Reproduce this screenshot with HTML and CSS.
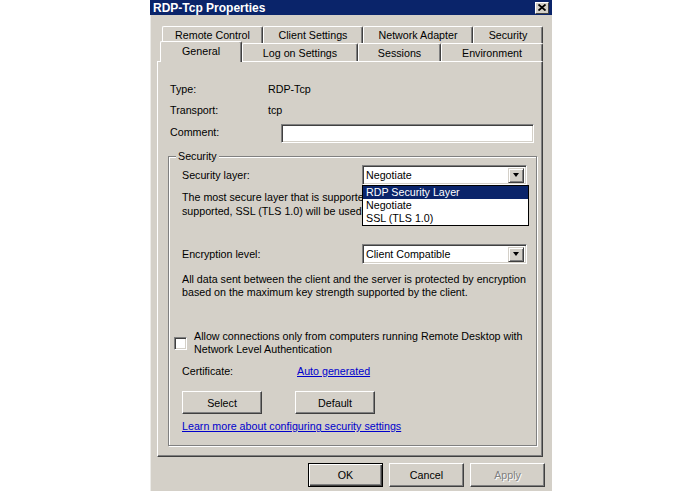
FILE: index.html
```html
<!DOCTYPE html>
<html lang="en">
<head>
    <meta charset="UTF-8">
    <title>RDP-Tcp Properties</title>
    <link rel="stylesheet" href="styles.css">
</head>
<body>
    <div class="window">
        <!-- title bar -->
        <div class="titlebar">
            <span class="title">RDP-Tcp Properties</span>
            <span class="close">
                <svg width="8" height="7" viewBox="0 0 8 7">
                    <path d="M0.5 0.5 L7.5 6.5 M7.5 0.5 L0.5 6.5" stroke="#000" stroke-width="1.8" fill="none"/>
                </svg>
            </span>
        </div>

        <!-- two rows of tabs -->
        <div class="tabs">
            <div class="tab-row back">
                <div class="tab tab-remote">Remote Control</div>
                <div class="tab tab-client">Client Settings</div>
                <div class="tab tab-adapter">Network Adapter</div>
                <div class="tab tab-security">Security</div>
            </div>
            <div class="tab-row front">
                <div class="tab tab-general active">General</div>
                <div class="tab tab-logon">Log on Settings</div>
                <div class="tab tab-sessions">Sessions</div>
                <div class="tab tab-env">Environment</div>
            </div>
        </div>

        <!-- General page -->
        <div class="panel">
            <div class="info-row">
                <span class="label">Type:</span>
                <span>RDP-Tcp</span>
            </div>
            <div class="info-row">
                <span class="label">Transport:</span>
                <span>tcp</span>
            </div>
            <div class="info-row">
                <span class="label">Comment:</span>
                <span class="textbox"></span>
            </div>

            <div class="group">
                <div class="group-title">Security</div>

                <div class="field-row layer-row">
                    <span>Security layer:</span>
                    <div class="combo">
                        <span class="combo-value">Negotiate</span>
                        <span class="combo-btn"><span class="arrow"></span></span>
                    </div>
                    <!-- open list, drawn over the text below -->
                    <ul class="dropdown">
                        <li class="selected">RDP Security Layer</li>
                        <li>Negotiate</li>
                        <li>SSL (TLS 1.0)</li>
                    </ul>
                </div>
                <p class="desc desc-layer">The most secure layer that is supported by the client will be used. If<br>supported, SSL (TLS 1.0) will be used.</p>

                <div class="field-row enc-row">
                    <span>Encryption level:</span>
                    <div class="combo">
                        <span class="combo-value">Client Compatible</span>
                        <span class="combo-btn"><span class="arrow"></span></span>
                    </div>
                </div>
                <p class="desc desc-enc">All data sent between the client and the server is protected by encryption<br>based on the maximum key strength supported by the client.</p>

                <div class="check-row">
                    <span class="checkbox"></span>
                    <span>Allow connections only from computers running Remote Desktop with<br>Network Level Authentication</span>
                </div>

                <div class="cert-row">
                    <span>Certificate:</span>
                    <a class="link" href="#">Auto generated</a>
                </div>

                <div class="cert-buttons">
                    <button class="btn btn-cert">Select</button>
                    <button class="btn btn-cert">Default</button>
                </div>

                <a class="link learn" href="#">Learn more about configuring security settings</a>
            </div>
        </div>

        <!-- dialog buttons -->
        <div class="actions">
            <button class="btn default">OK</button>
            <button class="btn">Cancel</button>
            <button class="btn disabled">Apply</button>
        </div>
    </div>
</body>
</html>
```

FILE: styles.css
```css
body {
    margin: 0;
    background-color: #fff;
    font-family: "Liberation Sans", Arial, sans-serif;
    font-size: 10.7px;
    color: #000;
}
.window {
    width: 402px;
    height: 491px;
    margin-left: 150px;
    background-color: #d4d0c8;
    box-shadow: inset 1px 0 0 #ecebe8;
    display: flex;
    flex-direction: column;
}

/* title bar */
.titlebar {
    height: 15px;
    background-color: #0a246a;
    display: flex;
    align-items: center;
    justify-content: space-between;
    padding: 0 3px;
}
.title {
    color: #fff;
    font-weight: bold;
    font-size: 12px;
}
.close {
    width: 14px;
    height: 12px;
    background-color: #d4d0c8;
    box-sizing: border-box;
    border: 1px solid;
    border-color: #fff #404040 #404040 #fff;
    display: flex;
    align-items: center;
    justify-content: center;
}

/* tabs */
.tabs {
    margin-top: 11px;
}
.tab-row {
    display: flex;
}
.tab-row.back {
    padding-left: 12px;
    height: 17px;
}
.tab-row.front {
    padding-left: 10px;
    height: 18px;
}
.tab {
    box-sizing: border-box;
    height: 100%;
    border-top: 1px solid #fff;
    border-left: 1px solid #fff;
    border-right: 1px solid #404040;
    box-shadow: inset -1px 0 0 #808080;
    border-radius: 2px 2px 0 0;
    display: flex;
    align-items: center;
    justify-content: center;
    background-color: #d4d0c8;
}
.tab-remote { width: 101px; }
.tab-client { width: 100px; }
.tab-adapter { width: 110px; }
.tab-security { width: 70px; }
.tab-general { width: 82px; }
.tab-logon { width: 116px; }
.tab-sessions { width: 83px; }
.tab-env { width: 102px; }
.tab.active {
    position: relative;
    z-index: 1;
    height: 21px;
    margin-top: -2px;
    padding-bottom: 2px;
}

/* page */
.panel {
    box-sizing: border-box;
    height: 396px;
    margin: 0 9px 0 7px;
    border-top: 1px solid #fff;
    border-left: 1px solid #fff;
    border-right: 1px solid #404040;
    border-bottom: 1px solid #404040;
    box-shadow: inset -1px -1px 0 #808080;
    padding: 16px 5px 0 10px;
}
.info-row {
    display: grid;
    grid-template-columns: 100px 1fr;
    height: 21px;
    align-items: center;
}
.info-row .label {
    padding-left: 2px;
}
.textbox {
    align-self: start;
    margin: 4px 3px 0 13px;
    height: 19px;
    box-sizing: border-box;
    background-color: #fff;
    border: 1px solid;
    border-color: #808080 #fff #fff #808080;
    box-shadow: inset 1px 1px 0 #404040, inset -1px -1px 0 #d4d0c8;
}

/* security group box */
.group {
    margin-top: 15px;
    height: 290px;
    box-sizing: border-box;
    border: 1px solid #808080;
    box-shadow: 1px 1px 0 #fff, inset 1px 1px 0 #fff;
    padding: 0 8px 0 13px;
}
.group-title {
    width: fit-content;
    margin: -7px 0 0 -6px;
    padding: 0 2px;
    line-height: 13px;
    background-color: #d4d0c8;
}
.field-row {
    display: grid;
    grid-template-columns: 180px 165px;
    height: 20px;
    align-items: center;
}
.layer-row {
    position: relative;
    margin-top: 2px;
}
.enc-row {
    margin-top: 26px;
}
.combo {
    height: 20px;
    box-sizing: border-box;
    background-color: #fff;
    border: 1px solid;
    border-color: #808080 #fff #fff #808080;
    box-shadow: inset 1px 1px 0 #404040, inset -1px -1px 0 #d4d0c8;
    padding: 2px 2px 2px 3px;
    display: flex;
    align-items: center;
    justify-content: space-between;
}
.combo-btn {
    width: 16px;
    height: 15px;
    box-sizing: border-box;
    background-color: #d4d0c8;
    border: 1px solid;
    border-color: #d4d0c8 #404040 #404040 #d4d0c8;
    box-shadow: inset 1px 1px 0 #fff, inset -1px -1px 0 #808080;
    display: flex;
    align-items: center;
    justify-content: center;
}
.arrow {
    width: 0;
    height: 0;
    border-left: 3.5px solid transparent;
    border-right: 3.5px solid transparent;
    border-top: 4px solid #000;
}
.dropdown {
    position: absolute;
    top: 20px;
    left: 180px;
    width: 167px;
    box-sizing: border-box;
    margin: 0;
    padding: 0;
    list-style: none;
    background-color: #fff;
    border: 1px solid #000;
    z-index: 2;
}
.dropdown li {
    height: 13px;
    line-height: 13px;
    padding-left: 3px;
}
.dropdown li.selected {
    background-color: #0a246a;
    color: #fff;
}
.desc {
    margin: 0;
}
.desc-layer {
    margin-top: 5px;
    line-height: 14px;
}
.desc-enc {
    margin-top: 9px;
    line-height: 13px;
}
.check-row {
    margin: 31px 0 0 -8px;
    display: flex;
    align-items: center;
    gap: 7px;
    line-height: 13px;
}
.checkbox {
    flex: none;
    width: 13px;
    height: 13px;
    box-sizing: border-box;
    background-color: #fff;
    border: 1px solid;
    border-color: #808080 #fff #fff #808080;
    box-shadow: inset 1px 1px 0 #404040, inset -1px -1px 0 #d4d0c8;
}
.cert-row {
    margin-top: 9px;
    display: grid;
    grid-template-columns: 115px auto;
    line-height: 13px;
    justify-items: start;
}
.link {
    color: #0000cc;
    text-decoration: underline;
}
.cert-buttons {
    margin-top: 13px;
    display: flex;
    gap: 33px;
}
.learn {
    display: block;
    width: fit-content;
    margin-top: 6px;
    line-height: 13px;
}

/* buttons */
.btn {
    width: 75px;
    height: 24px;
    padding: 0;
    box-sizing: border-box;
    font: inherit;
    color: #000;
    background-color: #d4d0c8;
    border: 1px solid;
    border-color: #fff #404040 #404040 #fff;
    box-shadow: inset -1px -1px 0 #808080;
}
.btn-cert {
    width: 80px;
    height: 23px;
}
.btn.default {
    border-color: #000;
    box-shadow: inset 1px 1px 0 #fff, inset -1px -1px 0 #404040, inset -2px -2px 0 #808080;
}
.btn.disabled {
    color: #808080;
    text-shadow: 1px 1px 0 #fff;
}
.actions {
    margin-top: 6px;
    padding-right: 7px;
    display: flex;
    justify-content: flex-end;
    gap: 6px;
}
```
